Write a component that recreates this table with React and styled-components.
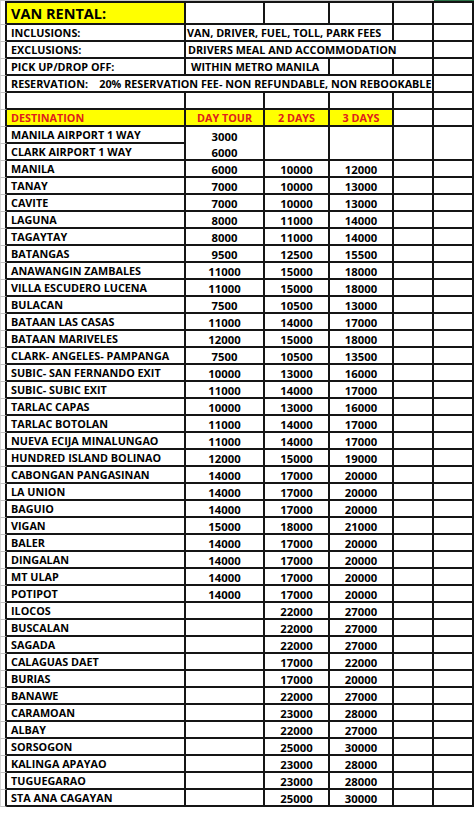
import styled, { createGlobalStyle } from 'styled-components';

const GlobalStyle = createGlobalStyle`
  html, body {
    margin: 0;
    padding: 0;
    background: #fff;
  }
  body {
    font-family: "Open Sans", "Liberation Sans", sans-serif;
    color: #000;
  }
`;

const rates = [
  ['MANILA AIRPORT 1 WAY', '3000', '', ''],
  ['CLARK AIRPORT 1 WAY', '6000', '', ''],
  ['MANILA', '6000', '10000', '12000'],
  ['TANAY', '7000', '10000', '13000'],
  ['CAVITE', '7000', '10000', '13000'],
  ['LAGUNA', '8000', '11000', '14000'],
  ['TAGAYTAY', '8000', '11000', '14000'],
  ['BATANGAS', '9500', '12500', '15500'],
  ['ANAWANGIN ZAMBALES', '11000', '15000', '18000'],
  ['VILLA ESCUDERO LUCENA', '11000', '15000', '18000'],
  ['BULACAN', '7500', '10500', '13000'],
  ['BATAAN LAS CASAS', '11000', '14000', '17000'],
  ['BATAAN MARIVELES', '12000', '15000', '18000'],
  ['CLARK- ANGELES- PAMPANGA', '7500', '10500', '13500'],
  ['SUBIC- SAN FERNANDO EXIT', '10000', '13000', '16000'],
  ['SUBIC- SUBIC EXIT', '11000', '14000', '17000'],
  ['TARLAC CAPAS', '10000', '13000', '16000'],
  ['TARLAC BOTOLAN', '11000', '14000', '17000'],
  ['NUEVA ECIJA MINALUNGAO', '11000', '14000', '17000'],
  ['HUNDRED ISLAND BOLINAO', '12000', '15000', '19000'],
  ['CABONGAN PANGASINAN', '14000', '17000', '20000'],
  ['LA UNION', '14000', '17000', '20000'],
  ['BAGUIO', '14000', '17000', '20000'],
  ['VIGAN', '15000', '18000', '21000'],
  ['BALER', '14000', '17000', '20000'],
  ['DINGALAN', '14000', '17000', '20000'],
  ['MT ULAP', '14000', '17000', '20000'],
  ['POTIPOT', '14000', '17000', '20000'],
  ['ILOCOS', '', '22000', '27000'],
  ['BUSCALAN', '', '22000', '27000'],
  ['SAGADA', '', '22000', '27000'],
  ['CALAGUAS DAET', '', '17000', '22000'],
  ['BURIAS', '', '17000', '20000'],
  ['BANAWE', '', '22000', '27000'],
  ['CARAMOAN', '', '23000', '28000'],
  ['ALBAY', '', '22000', '27000'],
  ['SORSOGON', '', '25000', '30000'],
  ['KALINGA APAYAO', '', '23000', '28000'],
  ['TUGUEGARAO', '', '23000', '28000'],
  ['STA ANA CAGAYAN', '', '25000', '30000'],
];

const YELLOW = '#ffff00';
const RED = '#e0201c';
const NUM = 11.3;

const App = () => {
  return (
    <>
      <GlobalStyle />
      <Page>
        <TopEdge />
        <Sheet>
          {/* title row */}
          <Gutter />
          <Cell $top $fill={YELLOW} $size={14.5}>VAN RENTAL:</Cell>
          <Cell $top />
          <Cell $top />
          <Cell $top />
          <Cell $top />
          <Cell $top />

          <Gutter />
          <Cell>INCLUSIONS:</Cell>
          <Cell $span={3} $pad={-3}>VAN, DRIVER, FUEL, TOLL, PARK FEES</Cell>
          <Cell />
          <Cell />

          <Gutter />
          <Cell>EXCLUSIONS:</Cell>
          <Cell $span={4} $pad={-2}>DRIVERS MEAL AND ACCOMMODATION</Cell>
          <Cell />

          <Gutter />
          <Cell>PICK UP/DROP OFF:</Cell>
          <Cell $span={2} $pad={1}>WITHIN METRO MANILA</Cell>
          <Cell />
          <Cell />
          <Cell />

          <Gutter />
          <Cell $span={5}>
            RESERVATION:&nbsp;&nbsp;&nbsp;&nbsp;20% RESERVATION FEE- NON REFUNDABLE, NON REBOOKABLE
          </Cell>
          <Cell />

          <Gutter />
          <Cell />
          <Cell />
          <Cell />
          <Cell />
          <Cell />
          <Cell />

          {/* header row */}
          <Gutter />
          <Cell $fill={YELLOW} $color={RED}>DESTINATION</Cell>
          <Cell $fill={YELLOW} $color={RED} $center>DAY TOUR</Cell>
          <Cell $fill={YELLOW} $color={RED} $center>2 DAYS</Cell>
          <Cell $fill={YELLOW} $color={RED} $center>3 DAYS</Cell>
          <Cell />
          <Cell />

          {rates.map(([place, day, two, three], i) => {
            const open = i === 0;
            return [
              <Gutter key={`g${i}`} />,
              <Cell key={`a${i}`}>{place}</Cell>,
              <Cell key={`b${i}`} $center $size={NUM} $open={open}>{day}</Cell>,
              <Cell key={`c${i}`} $center $size={NUM} $open={open}>{two}</Cell>,
              <Cell key={`d${i}`} $center $size={NUM} $open={open}>{three}</Cell>,
              <Cell key={`e${i}`} $open={open} />,
              <Cell key={`f${i}`} $open={open} />,
            ];
          })}
        </Sheet>
      </Page>
    </>
  );
};

const Page = styled.div`
  width: 474px;
  height: 814px;
  overflow: hidden;
  background: #fff;
`;

const TopEdge = styled.div`
  height: 1px;
  background: linear-gradient(to right, #c9c9c9 434px, #2b7348 434px);
`;

const Sheet = styled.div`
  display: grid;
  grid-template-columns: 7px 179px 79px 65px 64px 40px 40px;
  grid-template-rows: 24px;
  grid-auto-rows: 17px;
`;

const Gutter = styled.div`
  box-sizing: border-box;
  border-left: 1px solid #d6d6d6;
  border-right: 2px solid #151515;
  border-bottom: 1px solid #c4c4c4;
`;

const Cell = styled.div`
  box-sizing: border-box;
  grid-column: span ${(p) => p.$span || 1};
  display: flex;
  align-items: center;
  justify-content: ${(p) => (p.$center ? 'center' : 'flex-start')};
  padding-left: ${(p) => (p.$center ? 0 : 4 + (p.$pad || 0))}px;
  padding-top: 2px;
  background: ${(p) => p.$fill || '#fff'};
  color: ${(p) => p.$color || '#000'};
  border-right: 2px solid #151515;
  border-bottom: ${(p) => (p.$open ? 'none' : '2px solid #151515')};
  border-top: ${(p) => (p.$top ? '2px solid #151515' : 'none')};
  font-size: ${(p) => p.$size || 10.8}px;
  font-weight: 700;
  line-height: 1;
  white-space: nowrap;
  overflow: hidden;
`;

export default App;
